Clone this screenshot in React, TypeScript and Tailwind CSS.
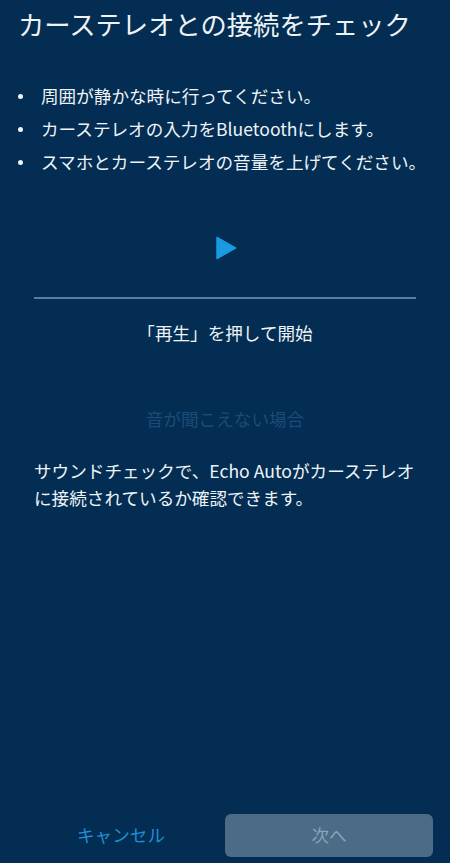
const tips = [
  "周囲が静かな時に行ってください。",
  "カーステレオの入力をBluetoothにします。",
  "スマホとカーステレオの音量を上げてください。",
];

const App = () => {
  return (
    <div
      className="flex h-[863px] w-[450px] flex-col bg-[#032d52] text-white"
      style={{ fontFamily: '"Noto Sans CJK JP", "Noto Sans", sans-serif' }}
    >
      <h1 className="mt-[5px] pl-[18px] text-[26.3px] leading-[38px] text-[#eef3f7]">
        カーステレオとの接続をチェック
      </h1>

      {/* 注意事項 */}
      <ul className="mt-[40px] flex flex-col gap-[7px] pl-[18px]">
        {tips.map((t) => (
          <li key={t} className="flex items-center text-[17.6px] leading-[26px] text-[#eef3f7]">
            <span className="mr-[18px] h-[5px] w-[5px] rounded-full bg-[#eef3f7]" />
            <span>{t}</span>
          </li>
        ))}
      </ul>

      <div className="mt-[61px] flex justify-center">
        <svg width="22" height="24" viewBox="0 0 22 24" className="ml-[2px]">
          <path d="M2 1.5 L20.5 12 L2 22.5 Z" fill="#1a9ae0" stroke="#1a9ae0" strokeWidth="1.5" strokeLinejoin="round" />
        </svg>
      </div>

      <div className="mx-[34px] mt-[37px] h-[2px] bg-[#5a7e9e]" />

      <p className="mt-[21px] text-center text-[17.6px] leading-[26px] text-[#eef3f7]">
        「再生」を押して開始
      </p>

      <p className="mt-[60px] text-center text-[17.6px] leading-[26px] text-[#1b4c78]">
        音が聞こえない場合
      </p>

      <p className="mt-[25px] px-[34px] text-[17.6px] leading-[27px] text-[#eef3f7]">
        サウンドチェックで、Echo Autoがカーステレオに接続されているか確認できます。
      </p>

      <div className="mt-auto mb-[6px] flex items-center px-[17px]">
        <button className="flex-1 text-[17.6px] text-[#1f8fd6]">キャンセル</button>
        <button className="h-[43px] w-[208px] rounded-[6px] bg-[#4b6b87] text-[17.6px] text-[#8aa3b8]">
          次へ
        </button>
      </div>
    </div>
  );
};

export default App;
